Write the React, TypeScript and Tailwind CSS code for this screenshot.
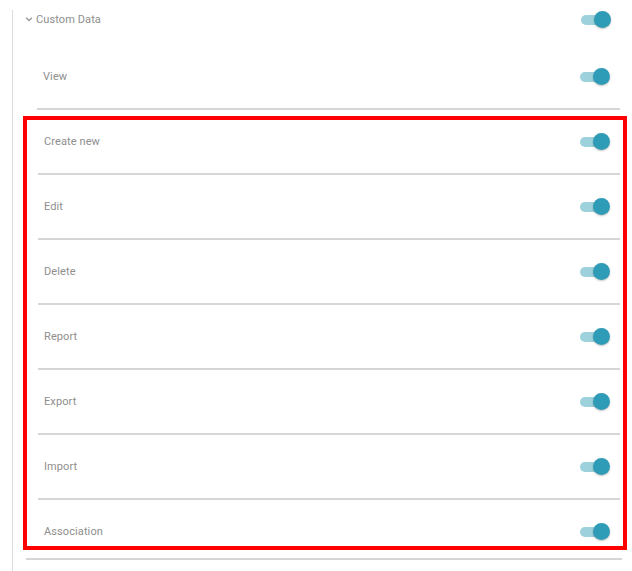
const Toggle = () => (
  <div className="relative w-[30px] h-[17px] shrink-0">
    <div className="absolute left-0 top-[4px] w-[24px] h-[10px] rounded-full bg-[#9dd1dc]" />
    <div className="absolute right-0 top-0 w-[17px] h-[17px] rounded-full bg-[#2e9cb6] shadow-[0_1px_2px_rgba(0,0,0,0.25)]" />
  </div>
);

const Row = ({ label, className }: { label: string; className: string }) => (
  <div className={className}>
    <div className="flex items-center justify-between h-[18px] pl-[6px] pr-[10px]">
      <span className="mt-[2px] text-[11px] text-[#8e8e8e] tracking-[0.1px]">{label}</span>
      <Toggle />
    </div>
  </div>
);

const items = ["Edit", "Delete", "Report", "Export", "Import"];

const App = () => {
  return (
    <div className="min-h-screen bg-white" style={{ fontFamily: "Roboto, 'Liberation Sans', sans-serif" }}>
      <div className="ml-[12px] min-h-[571px] border-l border-[#dcdcdc]">
        {/* section header */}
        <div className="flex items-center justify-between h-[18px] mt-[10px] pl-[12px] pr-[21px]">
          <div className="flex items-center gap-[3px]">
            <svg width="8" height="6" viewBox="0 0 8 6" className="mt-[1px]">
              <path d="M0.6 1.2 L1.6 0.2 L4 2.6 L6.4 0.2 L7.4 1.2 L4 4.6 Z" fill="#9a9a9a" />
            </svg>
            <span className="mt-[2px] text-[11px] text-[#8e8e8e] tracking-[0.1px]">Custom Data</span>
          </div>
          <Toggle />
        </div>

        <div className="mt-[17px] ml-[24px] mr-[12px]">
          <Row label="View" className="pt-[22px] pb-[23px] border-b-2 border-[#d6d6d6]" />
        </div>

        <div className="mt-[6px] ml-[10px] mr-[5px] border-4 border-[#ff0000]">
          <div className="ml-[11px] mr-[3px]">
            <Row label="Create new" className="pt-[12px] pb-[23px] border-b-2 border-[#d6d6d6]" />
            {items.map((label) => (
              <Row key={label} label={label} className="pt-[22px] pb-[23px] border-b-2 border-[#d6d6d6]" />
            ))}
            <Row label="Association" className="pt-[22px] pb-[6px]" />
          </div>
        </div>

        <div className="mt-[8px] ml-[13px] mr-[10px] h-[2px] bg-[#d6d6d6]" />
      </div>
    </div>
  );
};

export default App;
